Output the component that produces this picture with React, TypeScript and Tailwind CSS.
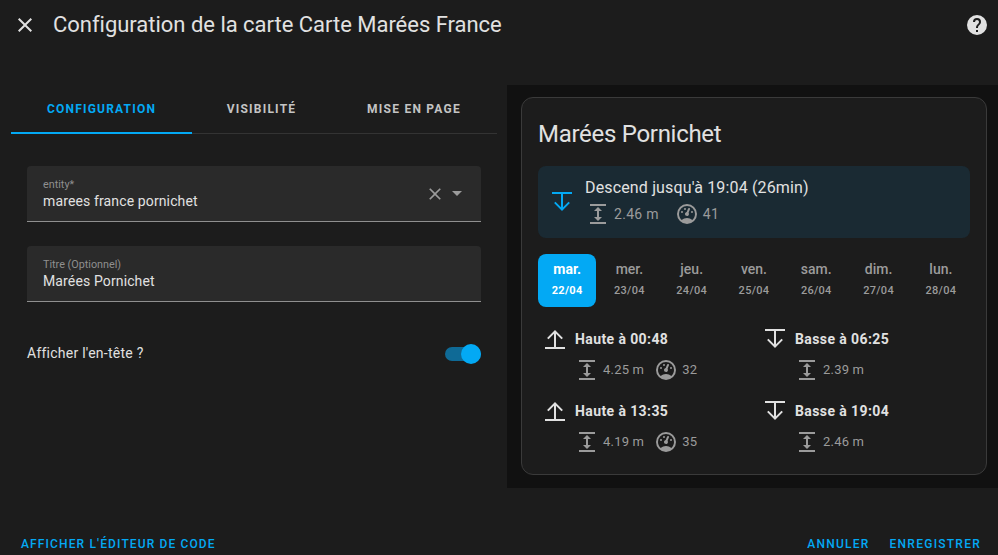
import type { ReactNode } from 'react';

const expandPath = 'M13,9V15H16L12,19L8,15H11V9H8L12,5L16,9H13M4,2H20V4H4V2M4,20H20V22H4V20Z';
const gaugePath =
    'M12,2A10,10 0 0,0 2,12A10,10 0 0,0 12,22A10,10 0 0,0 22,12A10,10 0 0,0 12,2M12,4A8,8 0 0,1 20,12C20,14.4 19,16.5 17.3,18C15.9,16.7 14,16 12,16C10,16 8.2,16.7 6.7,18C5,16.5 4,14.4 4,12A8,8 0 0,1 12,4M14,5.89C13.62,5.9 13.26,6.15 13.1,6.54L11.81,9.77L11.71,10C11,10.13 10.41,10.6 10.14,11.26C9.73,12.29 10.23,13.45 11.26,13.86C12.29,14.27 13.45,13.77 13.86,12.74C14.12,12.08 14,11.32 13.57,10.76L13.67,10.5L14.96,7.29L14.97,7.26C15.17,6.75 14.92,6.17 14.41,5.96C14.28,5.91 14.15,5.89 14,5.89M10,6A1,1 0 0,0 9,7A1,1 0 0,0 10,8A1,1 0 0,0 11,7A1,1 0 0,0 10,6M7,9A1,1 0 0,0 6,10A1,1 0 0,0 7,11A1,1 0 0,0 8,10A1,1 0 0,0 7,9M17,9A1,1 0 0,0 16,10A1,1 0 0,0 17,11A1,1 0 0,0 18,10A1,1 0 0,0 17,9Z';
const downPath = 'M2,2H22V4H13V17.17L18.5,11.67L19.92,13.08L12,21L4.08,13.08L5.5,11.67L11,17.17V4H2V2Z';
const upPath = 'M2,20H11V6.83L5.5,12.33L4.08,10.92L12,3L19.92,10.92L18.5,12.33L13,6.83V20H22V22H2V20Z';
const closePath = 'M19,6.41L17.59,5L12,10.59L6.41,5L5,6.41L10.59,12L5,17.59L6.41,19L12,13.41L17.59,19L19,17.59L13.41,12L19,6.41Z';

function Icon({ d, className }: { d: string; className?: string }) {
    return (
        <svg viewBox="0 0 24 24" fill="currentColor" className={className}>
            <path d={d} />
        </svg>
    );
}

function Field({ label, value, children }: { label: string; value: string; children?: ReactNode }) {
    return (
        <div className="h-14 bg-[#2a2a2a] rounded-t border-b border-[#8f8f8f] px-4 flex items-center justify-between">
            <div className="pt-px">
                <div className="text-[10.8px] leading-[14px] text-[#8f8f8f]">{label}</div>
                <div className="-mt-px text-sm leading-[20px] tracking-[0.13px] text-[#e1e1e1]">{value}</div>
            </div>
            {children}
        </div>
    );
}

function Tide({ up, title, height, coef }: { up: boolean; title: string; height: string; coef?: string }) {
    return (
        <div>
            <div className="flex items-center h-6">
                <Icon d={up ? upPath : downPath} className="w-6 h-6 text-[#e1e1e1]" />
                <span className="ml-2 text-sm font-bold text-[#e1e1e1] tracking-[0.4px]">{title}</span>
            </div>
            <div className="mt-[7px] pl-8 h-6 flex items-center text-[13px] text-[#9b9b9b] tracking-[0.2px]">
                <Icon d={expandPath} className="w-6 h-6" />
                <span className="ml-1">{height}</span>
                {coef && (
                    <>
                        <Icon d={gaugePath} className="w-6 h-6 ml-2.5" />
                        <span className="ml-1">{coef}</span>
                    </>
                )}
            </div>
        </div>
    );
}

const days = [
    ['mar.', '22/04'],
    ['mer.', '23/04'],
    ['jeu.', '24/04'],
    ['ven.', '25/04'],
    ['sam.', '26/04'],
    ['dim.', '27/04'],
    ['lun.', '28/04'],
];

export default function App() {
    return (
        <div className="w-[998px] h-[555px] overflow-hidden bg-[#1c1c1c] flex flex-col font-['Roboto',sans-serif]">
            <header className="h-[50px] flex items-center pl-[13px] pr-[9px] shrink-0">
                <Icon d={closePath} className="w-6 h-6 text-[#e1e1e1]" />
                <h1 className="ml-4 pb-0.5 text-[22px] tracking-[-0.02px] text-[#e1e1e1] flex-1">Configuration de la carte Carte Marées France</h1>
                <svg viewBox="0 0 24 24" fill="currentColor" className="w-6 h-6 text-[#e1e1e1]">
                    <path d="M15.07,11.25L14.17,12.17C13.45,12.89 13,13.5 13,15H11V14.5C11,13.39 11.45,12.39 12.17,11.67L13.41,10.41C13.78,10.05 14,9.55 14,9C14,7.89 13.1,7 12,7A2,2 0 0,0 10,9H8A4,4 0 0,1 12,5A4,4 0 0,1 16,9C16,9.88 15.64,10.67 15.07,11.25M13,19H11V17H13M12,2A10,10 0 0,0 2,12A10,10 0 0,0 12,22A10,10 0 0,0 22,12A10,10 0 0,0 12,2Z" />
                </svg>
            </header>

            <main className="mt-[35px] flex h-[403px] shrink-0">
                <section className="ml-[11px] w-[486px]">
                    <div className="h-[49px] flex border-b border-[#333] text-xs font-bold tracking-[1.2px] text-[#c4c4c4]">
                        <div className="relative w-[181px] flex items-center justify-center text-[#03a9f4]">
                            CONFIGURATION
                            <div className="absolute left-0 right-0 -bottom-px h-0.5 bg-[#03a9f4]" />
                        </div>
                        <div className="w-[139px] flex items-center justify-center">VISIBILITÉ</div>
                        <div className="flex-1 flex items-center justify-center tracking-[1.25px]">MISE EN PAGE</div>
                    </div>
                    <div className="mt-8 mx-4 flex flex-col gap-6">
                        <Field label="entity*" value="marees france pornichet">
                            <div className="flex items-center text-[#9b9b9b]">
                                <Icon d={closePath} className="w-5 h-5" />
                                <div className="ml-[7px] mr-[3px] w-0 h-0 border-x-[5px] border-x-transparent border-t-[5px] border-t-[#9b9b9b]" />
                            </div>
                        </Field>
                        <Field label="Titre (Optionnel)" value="Marées Pornichet" />
                    </div>
                    <div className="mt-[42px] mx-4 h-5 flex items-center justify-between">
                        <span className="text-sm tracking-[0.25px] text-[#e1e1e1] -translate-y-px">Afficher l'en-tête ?</span>
                        <div className="relative w-9 h-3.5 rounded-full bg-[#0f6a96]">
                            <div className="absolute right-0 -top-[3px] w-5 h-5 rounded-full bg-[#03a9f4]" />
                        </div>
                    </div>
                </section>

                <aside className="ml-2.5 flex-1 bg-[#111111] pt-3 pl-3.5 pr-[11px] pb-[13px]">
                    <div className="h-full rounded-xl border border-[#3a3a3a] bg-[#1c1c1c] px-4">
                        <h2 className="mt-5 text-2xl leading-8 tracking-[-0.288px] text-[#e1e1e1]">Marées Pornichet</h2>
                        <div className="mt-4 h-[72px] rounded-lg bg-[#1a2a33] flex items-center pl-3">
                            <Icon d={downPath} className="w-6 h-6 text-[#03a9f4]" />
                            <div className="ml-[11px]">
                                <div className="text-base leading-5 text-[#e1e1e1] tracking-[0.15px]">Descend jusqu'à 19:04 (26min)</div>
                                <div className="mt-1 pl-px h-6 flex items-center text-sm tracking-[0.3px] text-[#9b9b9b]">
                                    <Icon d={expandPath} className="w-6 h-6" />
                                    <span className="ml-1">2.46 m</span>
                                    <Icon d={gaugePath} className="w-6 h-6 ml-4" />
                                    <span className="ml-1">41</span>
                                </div>
                            </div>
                        </div>
                        <div className="mt-4 grid grid-cols-7 gap-1">
                            {days.map(([day, date], i) => (
                                <div
                                    key={date}
                                    className={`h-[53px] pb-0.5 rounded-lg flex flex-col items-center justify-center ${i === 0 ? 'bg-[#03a9f4] text-white' : 'text-[#9b9b9b]'}`}
                                >
                                    <span className={`text-sm leading-[21px] ${i === 0 ? 'font-bold' : 'font-medium'}`}>{day}</span>
                                    <span className={`text-[11px] leading-[21px] tracking-[0.3px] ${i === 0 ? 'font-bold' : 'font-medium'}`}>{date}</span>
                                </div>
                            ))}
                        </div>
                        <div className="mt-5 pl-[5px] grid grid-cols-[220px_1fr] gap-y-[17px]">
                            <Tide up title="Haute à 00:48" height="4.25 m" coef="32" />
                            <Tide up={false} title="Basse à 06:25" height="2.39 m" />
                            <Tide up title="Haute à 13:35" height="4.19 m" coef="35" />
                            <Tide up={false} title="Basse à 19:04" height="2.46 m" />
                        </div>
                    </div>
                </aside>
            </main>

            <footer className="mt-auto h-[67px] shrink-0 flex items-end justify-between pl-[21px] pr-[17px] pb-[3px] text-xs font-medium tracking-[1.25px] text-[#03a9f4]">
                <span className="tracking-[1.13px]">AFFICHER L'ÉDITEUR DE CODE</span>
                <div className="flex gap-5">
                    <span>ANNULER</span>
                    <span>ENREGISTRER</span>
                </div>
            </footer>
        </div>
    );
}
